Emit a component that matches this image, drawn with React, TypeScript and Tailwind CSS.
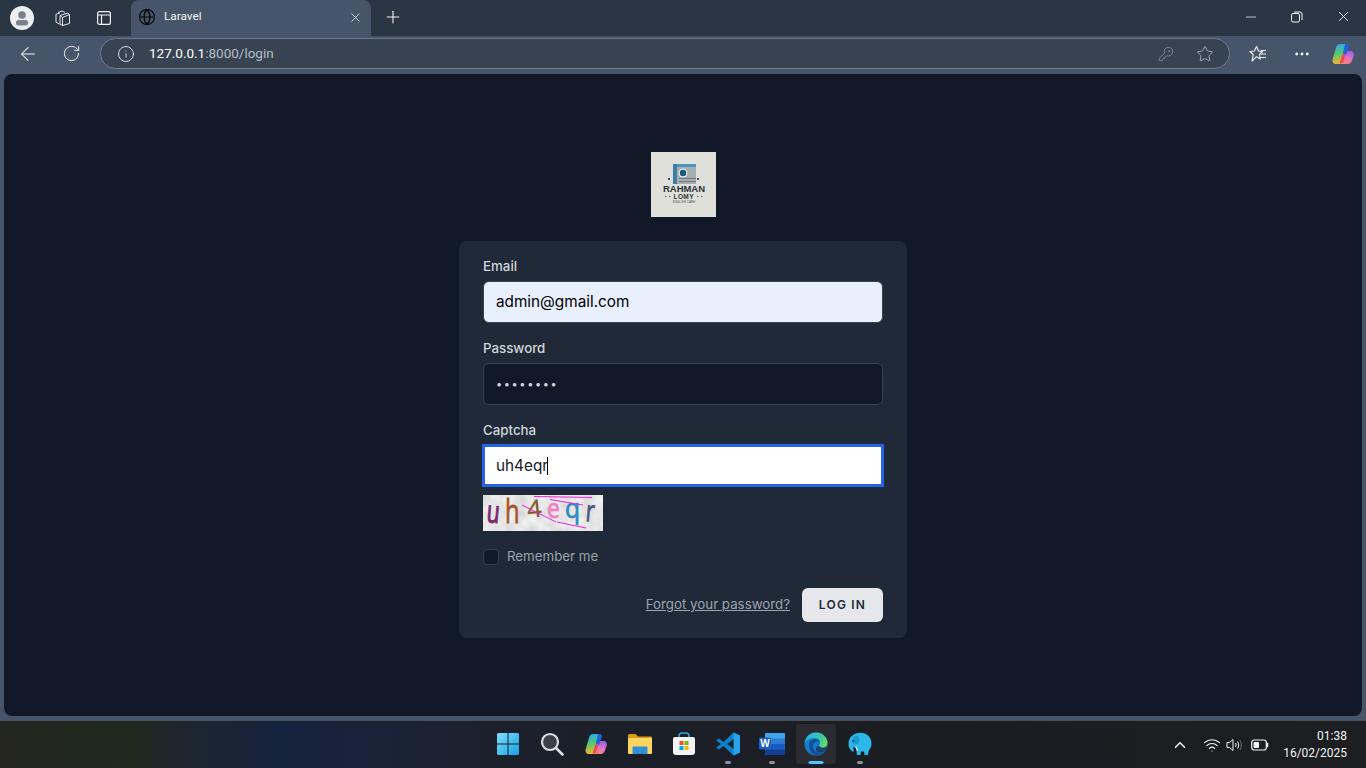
import { Globe, X, Plus, ArrowLeft, RotateCw, Info, KeyRound, Star, MoreHorizontal, Minus, ChevronUp, Wifi } from "lucide-react";

const sans = "font-['Inter','Liberation_Sans',sans-serif]";
const edge = "font-['Roboto','Liberation_Sans',sans-serif]";

function ProfileIcon() {
  return (
    <svg width="24" height="24" viewBox="0 0 24 24">
      <circle cx="12" cy="12" r="12" fill="#eceef0" />
      <circle cx="12" cy="9" r="3.800" fill="#7a818a" />
      <path d="M6 16.500a2.500 2.500 0 0 1 2.500-2.500h7a2.500 2.500 0 0 1 2.500 2.500v.5a2.500 2.500 0 0 1-2.500 2.500h-7A2.500 2.500 0 0 1 6 17z" fill="#7a818a" />
    </svg>
  );
}

function WorkspacesIcon() {
  return (
    <svg width="18" height="18" viewBox="0 0 18 18" fill="none" stroke="#e4e7ea" strokeWidth="1">
      <path d="M7 6.500l8-2.500 1.500 1.500v9l-7 2-2.500-1.500z" />
      <path d="M7 6.500l2.500 2v8.500M9.500 8.500l7-3" />
      <path d="M7 4l-4 1.200v8l3.500 2M5 3.500l4-1.500 3 1.500" />
    </svg>
  );
}

function VerticalTabsIcon() {
  return (
    <svg width="16" height="16" viewBox="0 0 16 16" fill="none" stroke="#f2f3f5" strokeWidth="1.200">
      <rect x="1.600" y="1.600" width="12.800" height="12.800" rx="2" />
      <path d="M1.600 5h12.800M5.500 5v9.400" />
    </svg>
  );
}

function RestoreIcon() {
  return (
    <svg width="12" height="12" viewBox="0 0 12 12" fill="none" stroke="#f2f3f5" strokeWidth="1">
      <rect x="0.500" y="2.500" width="8" height="8.500" rx="1.500" />
      <path d="M3 1h6a2 2 0 0 1 2 2v6" />
    </svg>
  );
}

function FavoritesIcon() {
  return (
    <svg width="20" height="20" viewBox="0 0 20 20" fill="none" stroke="#f2f3f5" strokeWidth="1.100" strokeLinejoin="round">
      <path d="M8.500 2.500l2 4.500 4 .5-3 3 .8 4.500-3.800-2.300-4.500 4.300 1.200-6.500-3.300-3 4.500-.5z" />
      <path d="M13 6.500h5M13 10h5M12.500 13.500h5.500" />
    </svg>
  );
}

function CopilotIcon({ size = 24 }: { size?: number }) {
  return (
    <svg width={size} height={size} viewBox="0 0 24 24">
      <defs>
        <linearGradient id="cpA" x1="0.300" y1="0" x2="0.400" y2="1">
          <stop offset="0" stopColor="#2aa8f2" />
          <stop offset="0.500" stopColor="#5cc86a" />
          <stop offset="1" stopColor="#f7b32b" />
        </linearGradient>
        <linearGradient id="cpB" x1="0.700" y1="0" x2="0.300" y2="1">
          <stop offset="0" stopColor="#8f62ea" />
          <stop offset="0.500" stopColor="#e86ec6" />
          <stop offset="1" stopColor="#f7876a" />
        </linearGradient>
      </defs>
      <path d="M9 2h6c1.500 0 2 1 1.600 2L11 20c-.4 1.400-1.500 2-3 2H5c-2.500 0-4-2-3.400-4.500L5 6c.6-2.500 2-4 4-4z" fill="url(#cpA)" />
      <path d="M15 9h4.500c2.500 0 3.900 2 3.300 4.500L21 18.500c-.8 2.500-2.200 3.500-4.500 3.500h-6c-1.500 0-2-1-1.500-2z" fill="url(#cpB)" />
      <path d="M14 2h1.500c2 0 2.800 1.300 2.300 3L15 13l-3.200-1.500z" fill="#1f62d8" />
      <path d="M11.500 12l3 1-2.800 8-3 .5z" fill="#ea4a4f" />
    </svg>
  );
}

function WindowsIcon() {
  return (
    <svg width="24" height="24" viewBox="0 0 24 24">
      <defs>
        <linearGradient id="winG" x1="0" y1="0" x2="1" y2="1">
          <stop offset="0" stopColor="#7be0fa" />
          <stop offset="1" stopColor="#1a9fe6" />
        </linearGradient>
      </defs>
      <path d="M1 2.500A1.500 1.500 0 0 1 2.500 1h9v10.500H1zM12.500 1h9A1.500 1.500 0 0 1 23 2.500v9H12.500zM1 12.500h10.500V23h-9A1.500 1.500 0 0 1 1 21.500zM12.500 12.500H23v9a1.500 1.500 0 0 1-1.500 1.500h-9z" fill="url(#winG)" />
    </svg>
  );
}

function SearchIcon() {
  return (
    <svg width="24" height="24" viewBox="0 0 24 24">
      <circle cx="10" cy="10" r="8" fill="#3b3e47" stroke="#dcdde0" strokeWidth="2.200" />
      <path d="M16 16l6.500 6.500" stroke="#dcdde0" strokeWidth="2.600" strokeLinecap="round" />
    </svg>
  );
}

function FolderIcon() {
  return (
    <svg width="24" height="24" viewBox="0 0 24 24">
      <path d="M0 3.500A1.500 1.500 0 0 1 1.500 2h6l2.500 2.500h13A1 1 0 0 1 24 5.500V8H0z" fill="#d99c14" />
      <rect x="0" y="6" width="24" height="16" rx="1" fill="#fcd462" />
      <rect x="4.500" y="14.500" width="15" height="7.500" rx="1" fill="#2f8fd3" />
    </svg>
  );
}

function StoreIcon() {
  return (
    <svg width="24" height="24" viewBox="0 0 24 24">
      <path d="M7 6V4a3 3 0 0 1 3-3h4a3 3 0 0 1 3 3v2" fill="none" stroke="#2fa6e0" strokeWidth="1.600" />
      <path d="M1 7a2 2 0 0 1 2-2h18a2 2 0 0 1 2 2v13a3 3 0 0 1-3 3H4a3 3 0 0 1-3-3z" fill="#f3f3f3" />
      <rect x="7.500" y="9" width="4" height="4" fill="#f25022" />
      <rect x="12.500" y="9" width="4" height="4" fill="#7fba00" />
      <rect x="7.500" y="14" width="4" height="4" fill="#00a4ef" />
      <rect x="12.500" y="14" width="4" height="4" fill="#ffb900" />
    </svg>
  );
}

function VsCodeIcon() {
  return (
    <svg width="24" height="24" viewBox="0 0 24 24">
      <path d="M17.500 0.500L24 3.500v17l-6.500 3L7.500 14l-4.500 3.500L0 15.500 5 12 0 8.500l3-2L7.500 10z" fill="#0f7fcc" />
      <path d="M17.500 0.500L24 3.500v17l-6.500 3z" fill="#28a3ec" />
      <path d="M17.500 7l-6 5 6 5z" fill="#1a1e27" />
    </svg>
  );
}

function WordIcon() {
  return (
    <svg width="26" height="24" viewBox="0 0 26 24">
      <rect x="6" y="1" width="20" height="22" rx="1.500" fill="#2b7cd3" />
      <rect x="6" y="1" width="20" height="5.500" rx="1" fill="#41a5ee" />
      <rect x="6" y="12" width="20" height="5.500" fill="#185abd" />
      <rect x="6" y="17.500" width="20" height="5.500" rx="1" fill="#103f91" />
      <rect x="0" y="5.500" width="12" height="12" rx="1.200" fill="#1a5fbf" />
      <text x="6" y="15" textAnchor="middle" fontSize="10" fontWeight="700" fill="#ffffff" fontFamily="Liberation Sans, sans-serif">W</text>
    </svg>
  );
}

function EdgeIcon() {
  return (
    <svg width="24" height="24" viewBox="0 0 24 24">
      <defs>
        <linearGradient id="edgeBase" x1="0" y1="0" x2="0.600" y2="1">
          <stop offset="0" stopColor="#1488d8" />
          <stop offset="1" stopColor="#1a6fc4" />
        </linearGradient>
        <linearGradient id="edgeTop" x1="0" y1="0.300" x2="1" y2="0.700">
          <stop offset="0" stopColor="#2bb6e8" />
          <stop offset="0.600" stopColor="#35c8a8" />
          <stop offset="1" stopColor="#6fdc5a" />
        </linearGradient>
      </defs>
      <circle cx="12" cy="12" r="11.500" fill="url(#edgeBase)" />
      <path d="M.8 10.500C2 4.500 6.500.5 12 .5c6.500 0 11.500 5 11.500 10.500 0 2.800-2 4.500-4.800 4.500-2 0-3.500-.8-3.500-2 0-.8.8-1.200.8-2.700 0-3-3-4.800-6-4.800-4.500 0-7.500 1.500-9.200 4.500z" fill="url(#edgeTop)" />
      <path d="M5 13c0-4 3.500-6.500 7-6 1.800.2 3.500 1.200 4 2.800-3-1-7 .5-7 4.700 0 3.500 3 6.500 7 6.500 1 0 2-.2 3-.5-2 1.500-4.500 2.500-7 2.500-4 0-7-5-7-10z" fill="#0f4f96" />
      <path d="M15 13.500c1 2.500 4 2.800 6 2l2-1.500c-.6 3-2 5-4 6-3 1-5.500.5-6.500-1-1.200-1.800-.5-4 2.500-5.500z" fill="#1a1d24" opacity="0.550" />
    </svg>
  );
}

function ElephantIcon() {
  return (
    <svg width="24" height="24" viewBox="0 0 24 24">
      <path d="M12.500.8c6 0 11 4.500 11 10.500 0 3-1 5.500-2.800 7.200L20 23h-3.500l-.5-3.500h-3L12.500 23H9l-.8-6.500C7 16 6 15 5.500 14c-.2 1.500-.2 3 .3 4.500.2.800-.8 1.300-1.500.8C1.500 17.500.3 14.500.5 11 .8 5.500 6 .8 12.500.8z" fill="#2db6ea" />
      <path d="M6.500 4.500C4.500 6 4 9 5 11.500c1.500 1.200 4 1.200 5.500-.3C12 9 11.500 5.500 9.500 4z" fill="#189bd0" />
      <circle cx="5" cy="9" r="0.900" fill="#0f3f5a" />
      <path d="M8 15l1.500 3.500" stroke="#eaf8ff" strokeWidth="1.200" strokeLinecap="round" />
    </svg>
  );
}

function BatteryIcon() {
  return (
    <svg width="18" height="12" viewBox="0 0 18 12" fill="none">
      <rect x="0.700" y="1" width="14.600" height="10" rx="2.500" stroke="#f2f3f5" strokeWidth="1.200" />
      <rect x="2.500" y="3" width="5.500" height="6" rx="1" fill="#f2f3f5" />
      <path d="M16.500 4.500v3" stroke="#f2f3f5" strokeWidth="1.500" strokeLinecap="round" />
    </svg>
  );
}

function VolumeIcon() {
  return (
    <svg width="17" height="14" viewBox="0 0 17 14" fill="none" stroke="#f2f3f5" strokeWidth="1">
      <path d="M1 4.500h2.500L7 1.500v11l-3.500-3H1z" />
      <path d="M9.500 5c.8 1.200.8 2.800 0 4M11.500 3.500c1.500 2 1.500 5 0 7" />
      <path d="M13.800 2c2 3 2 7 0 10" stroke="#6b6f75" />
    </svg>
  );
}

function TaskbarButton({ children, dot, active }: { children: React.ReactNode; dot?: boolean; active?: boolean }) {
  return (
    <div className={`relative flex h-10 w-10 items-center justify-center rounded ${active ? "bg-[#2a2c31]" : ""}`}>
      {children}
      {dot && <span className="absolute bottom-0 left-1/2 h-[3px] w-[6px] -translate-x-1/2 rounded-full bg-[#8e9196]" />}
      {active && <span className="absolute bottom-0 left-1/2 h-[3px] w-[15px] -translate-x-1/2 rounded-full bg-[#4cc2ff]" />}
    </div>
  );
}

function Logo() {
  return (
    <svg width="65" height="65" viewBox="0 0 65 65" className="block">
      <rect width="65" height="65" fill="#dfe0da" />
      <rect x="22" y="12" width="23" height="20" fill="#a6adaf" />
      <rect x="22" y="12" width="23" height="3" fill="#4a97c6" />
      <rect x="22" y="12" width="4" height="20" fill="#3d7ea6" />
      <rect x="28" y="26" width="17" height="1" fill="#6f777b" />
      <rect x="28" y="29" width="17" height="1" fill="#6f777b" />
      <circle cx="32" cy="21" r="4.500" fill="#e8e8e4" />
      <circle cx="32" cy="21" r="3.200" fill="#15587c" />
      <rect x="17" y="26" width="2" height="2" fill="#38505f" />
      <rect x="46" y="26" width="2" height="2" fill="#38505f" />
      <text x="12" y="40" textLength="42" lengthAdjust="spacing" fontSize="9.500" fontWeight="700" fill="#2b3338" fontFamily="Liberation Sans, sans-serif">RAHMAN</text>
      <text x="22.500" y="46.500" textLength="20" lengthAdjust="spacing" fontSize="6.500" fontWeight="700" fill="#2b3338" fontFamily="Liberation Sans, sans-serif">LOMY</text>
      <rect x="14" y="44" width="1.500" height="1" fill="#5a6468" />
      <rect x="18" y="44" width="1.500" height="1" fill="#5a6468" />
      <rect x="46" y="44" width="1.500" height="1" fill="#5a6468" />
      <rect x="50" y="44" width="1.500" height="1" fill="#5a6468" />
      <text x="33" y="51" textAnchor="middle" fontSize="3" fill="#4a5358" fontFamily="Liberation Sans, sans-serif">ENGLISH CARE</text>
    </svg>
  );
}

type CaptchaLetter = { ch: string; x: number; y: number; color: string; size: number; sx: number; rot: number; stroke: number };

const captchaLetters: CaptchaLetter[] = [
  { ch: "u", x: 3, y: 27, color: "#7b2a72", size: 31, sx: 0.68, rot: 5, stroke: 1.2 },
  { ch: "h", x: 22, y: 28, color: "#a9552a", size: 33, sx: 0.72, rot: 0, stroke: 0.8 },
  { ch: "4", x: 45, y: 23, color: "#7d5a26", size: 24, sx: 1.05, rot: -6, stroke: 0.3 },
  { ch: "e", x: 64, y: 23, color: "#ef7fc0", size: 28, sx: 0.82, rot: 0, stroke: 0.7 },
  { ch: "q", x: 82, y: 23, color: "#2a8cc4", size: 28, sx: 0.88, rot: 0, stroke: 0.7 },
  { ch: "r", x: 102, y: 26, color: "#4b5482", size: 30, sx: 0.72, rot: 5, stroke: 0.8 },
];

function Captcha() {
  return (
    <svg width="120" height="36" viewBox="0 0 120 36" className="mt-2 block overflow-visible">
      <defs>
        <filter id="noise" x="0" y="0" width="100%" height="100%">
          <feTurbulence type="fractalNoise" baseFrequency="0.09" numOctaves="2" seed="4" />
          <feColorMatrix values="0 0 0 0 0.55 0 0 0 0 0.55 0 0 0 0 0.55 0.9 0 0 0 -0.2" />
        </filter>
      </defs>
      <rect width="120" height="36" fill="#f1f1f1" />
      <rect width="120" height="36" filter="url(#noise)" />
      {captchaLetters.map((l) => (
        <text
          key={l.ch}
          fontSize={l.size}
          fill={l.color}
          stroke={l.color}
          strokeWidth={l.stroke}
          fontFamily="Open Sans, sans-serif"
          transform={`translate(${l.x} ${l.y}) rotate(${l.rot}) scale(${l.sx} 1)`}
        >
          {l.ch}
        </text>
      ))}
      <g stroke="#f21fdc" strokeWidth="1" fill="none">
        <path d="M51 1.500L109 2.500" />
        <path d="M67 4.500L100 10" />
        <path d="M39 10L73 27" />
        <path d="M74 27L103 33" />
      </g>
    </svg>
  );
}

function Field({ label, children }: { label: string; children: React.ReactNode }) {
  return (
    <div>
      <label className="block text-[13.300px] font-medium leading-[19px] text-[#d1d5db]">{label}</label>
      {children}
    </div>
  );
}

export default function App() {
  return (
    <div className="flex h-[768px] w-[1366px] flex-col overflow-hidden bg-[#465569]">
      {/* tab strip */}
      <div className={`flex h-9 items-stretch bg-[#2b3644] ${edge}`}>
        <div className="flex w-[131px] items-center pl-[10px]">
          <ProfileIcon />
          <span className="ml-[19px]"><WorkspacesIcon /></span>
          <span className="ml-[25px]"><VerticalTabsIcon /></span>
        </div>
        <div className="flex w-[240px] items-center rounded-t-lg bg-[#465569] pl-[7px] pr-[8px] pb-[2px]">
          <Globe size={18} strokeWidth={1.5} className="text-black" />
          <span className="ml-[8px] flex-1 text-[11.800px] text-[#f2f3f5]">Laravel</span>
          <X size={15} strokeWidth={1.3} className="text-[#eceef0]" />
        </div>
        <div className="flex w-[43px] items-center justify-center pb-[2px]">
          <Plus size={20} strokeWidth={1.3} className="text-[#f2f3f5]" />
        </div>
        <div className="ml-auto flex items-center pb-[3px]">
          <div className="flex w-[46px] justify-center"><Minus size={16} strokeWidth={1.1} className="text-[#f2f3f5]" /></div>
          <div className="flex w-[46px] justify-center"><RestoreIcon /></div>
          <div className="flex w-[46px] justify-center"><X size={17} strokeWidth={1.2} className="text-[#f2f3f5]" /></div>
        </div>
      </div>

      {/* address bar */}
      <div className={`flex h-9 items-center pb-px ${edge}`}>
        <div className="flex w-[100px] shrink-0 items-center pl-[17px]">
          <ArrowLeft size={22} strokeWidth={1.1} className="text-[#f2f3f5]" />
          <RotateCw size={19} strokeWidth={1.2} className="ml-[23px] text-[#f2f3f5]" />
        </div>
        <div className="flex h-[31px] w-[1130px] items-center rounded-full border border-[#717c8b] bg-[#374352] pl-[16px] pr-[15px]">
          <Info size={18} strokeWidth={1.2} className="text-[#e4e7ea]" />
          <span className="ml-[14px] text-[13.500px] text-[#b5bcc5]">
            <span className="text-white">127.0.0.1</span>:8000/login
          </span>
          <KeyRound size={16} strokeWidth={1.2} className="ml-auto text-[#8c95a1]" />
          <Star size={18} strokeWidth={1.2} className="ml-[22px] text-[#aab1ba]" />
        </div>
        <span className="ml-[18px]"><FavoritesIcon /></span>
        <MoreHorizontal size={18} strokeWidth={1.8} className="ml-[25px] text-[#f2f3f5]" />
        <span className="ml-[20px]"><CopilotIcon size={24} /></span>
      </div>

      {/* page */}
      <main className={`mx-1 mt-[2px] flex h-[642px] flex-col items-center justify-center rounded-lg bg-[#111827] ${sans}`}>
        <Logo />
        <div className="mt-6 w-[448px] rounded-lg bg-[#1f2937] px-6 py-4">
          <Field label="Email">
            <input
              readOnly
              defaultValue="admin@gmail.com"
              className="mt-[5px] block h-[42px] w-full rounded-md border border-[#374151] bg-[#e8f0fe] px-3 pb-[2px] text-[15.300px] text-black outline-none"
            />
          </Field>
          <div className="mt-4">
            <Field label="Password">
              <input
                readOnly
                type="password"
                defaultValue="password"
                className="mt-[5px] block h-[42px] w-full rounded-md border border-[#374151] bg-[#111827] px-3 text-[11px] tracking-[1.600px] text-[#d1d5db] outline-none"
              />
            </Field>
          </div>
          <div className="mt-4">
            <Field label="Captcha">
              <div className="relative -mx-px mt-[4px]">
                <input
                  readOnly
                  defaultValue="uh4eqr"
                  className="block h-[43px] w-full border-[3px] border-[#2563eb] bg-white px-[11px] text-[15.300px] text-[#111827] outline-none"
                />
                <span className="absolute left-[65px] top-[13px] h-[18px] w-px bg-black" />
              </div>
            </Field>
            <Captcha />
          </div>
          <label className="mt-[16px] flex h-5 items-center">
            <span className="h-4 w-4 rounded border border-[#374151] bg-[#111827]" />
            <span className="ml-2 text-[13.300px] text-[#9ca3af]">Remember me</span>
          </label>
          <div className="mt-[21px] flex items-center justify-end">
            <a className="text-[13.300px] text-[#9ca3af] underline">Forgot your password?</a>
            <button className="ml-3 h-[34px] w-[81px] rounded-md bg-[#e5e7eb] text-xs font-semibold tracking-widest text-[#1f2937]">LOG IN</button>
          </div>
        </div>
      </main>

      {/* taskbar */}
      <footer className={`relative mt-1 flex h-12 items-center justify-center border-t border-[#4b5058] bg-[linear-gradient(90deg,#24261f_0px,#1f2a1e_130px,#1d2530_190px,#16233d_280px,#1a2338_380px,#1b202a_500px,#1b1d23_900px,#1c1e21_100%)] pb-[2px] pl-[2px] ${edge}`}>
        <div className="flex items-center gap-[4px]">
          <TaskbarButton><WindowsIcon /></TaskbarButton>
          <TaskbarButton><SearchIcon /></TaskbarButton>
          <TaskbarButton><CopilotIcon /></TaskbarButton>
          <TaskbarButton><FolderIcon /></TaskbarButton>
          <TaskbarButton><StoreIcon /></TaskbarButton>
          <TaskbarButton dot><VsCodeIcon /></TaskbarButton>
          <TaskbarButton dot><WordIcon /></TaskbarButton>
          <TaskbarButton active><EdgeIcon /></TaskbarButton>
          <TaskbarButton dot><ElephantIcon /></TaskbarButton>
        </div>
        <div className="absolute right-[19px] top-0 flex h-[47px] items-center text-[#f2f3f5]">
          <ChevronUp size={18} strokeWidth={2} />
          <Wifi size={18} strokeWidth={1.6} className="ml-[14px]" />
          <span className="ml-[5px]"><VolumeIcon /></span>
          <span className="ml-[8px]"><BatteryIcon /></span>
          <div className="ml-[14px] text-right text-xs leading-[17px]">
            <div>01:38</div>
            <div>16/02/2025</div>
          </div>
        </div>
      </footer>
    </div>
  );
}
